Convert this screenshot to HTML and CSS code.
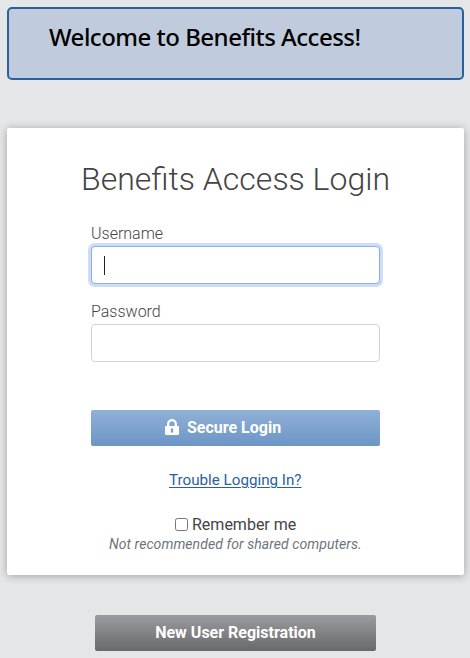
FILE: index.html
```html
<!DOCTYPE html>
<html lang="en">
<head>
<meta charset="utf-8">
<title>Benefits Access Login</title>
<link rel="stylesheet" href="styles.css">
</head>
<body>
<header class="banner"><h1 class="banner-title">Welcome to Benefits Access!</h1></header>
<main class="card">
  <h2 class="card-title"><span class="card-title-text">Benefits Access Login</span></h2>
  <form class="form">
    <div class="label"><span class="label-user">Username</span></div>
    <div class="field field-focus" role="textbox" tabindex="0"><span class="caret"></span></div>
    <div class="label label-second"><span class="label-pass">Password</span></div>
    <div class="field" role="textbox" tabindex="0"></div>
    <button class="button button-login" type="button">
      <svg class="lock" viewBox="0 0 14 16" width="14" height="16"><path fill="#fff" fill-rule="evenodd" d="M1 7h1V5a5 5 0 0 1 10 0v2h1q1 0 1 1v7q0 1-1 1H1q-1 0-1-1V8q0-1 1-1zM4.3 7h5.4V5a2.7 2.7 0 0 0-5.4 0zM7 9.2a1.2 1.2 0 0 0-1.2 1.2v2.2a1.2 1.2 0 0 0 2.4 0v-2.2A1.2 1.2 0 0 0 7 9.2z"/></svg>
      <span class="login-text">Secure Login</span>
    </button>
  </form>
  <div class="trouble"><a class="link" href="#">Trouble Logging In?</a></div>
  <label class="remember"><input class="check" type="checkbox"><span class="remember-text">Remember me</span></label>
  <div class="note"><span class="note-text">Not recommended for shared computers.</span></div>
</main>
<button class="button button-register" type="button"><span class="register-text">New User Registration</span></button>
</body>
</html>
```
FILE: styles.css
```css
* { box-sizing: border-box; }
body {
  margin: 0;
  height: 658px;
  padding: 7px 6px 0 7px;
  overflow: hidden;
  background: #e5e6e8;
  color: #444;
  font: 16px/24px Roboto, sans-serif;
}
.banner {
  height: 73px;
  padding: 12px 0 0 40px;
  border: 2px solid #2b5f9e;
  border-radius: 5px;
  background: #c0cbdd;
}
.banner-title {
  margin: 0;
  color: #000;
  font: 500 24px/32px "Noto Sans", "Open Sans", sans-serif;
  letter-spacing: -0.5px;
  white-space: nowrap;
}
.card {
  height: 447px;
  margin-top: 48px;
  padding-top: 30px;
  border-radius: 2px;
  background: #fff;
  box-shadow: 0 1px 8px rgba(0, 0, 0, 0.3);
}
.card-title {
  margin: 0;
  padding-left: 74px;
  font-size: 32px;
  font-weight: 300;
  line-height: 42px;
  white-space: nowrap;
}
.form { width: 289px; margin: 22px 0 0 84px; }
.label { height: 24px; font-weight: 300; }
.label-second { margin-top: 16px; }
.field {
  display: flex;
  align-items: center;
  height: 38px;
  padding-left: 12px;
  border: 1px solid #d2d3d5;
  border-radius: 4px;
  background: #fff;
}
.field-focus { border-color: #88aee9; box-shadow: 0 0 0 3px #cedcf8; }
.caret { width: 1px; height: 19px; background: #222; }
.button {
  display: flex;
  align-items: center;
  justify-content: center;
  height: 36px;
  padding: 0;
  border: 0;
  border-radius: 2px;
  color: #fff;
  font: 700 16px/24px Roboto, sans-serif;
  white-space: nowrap;
}
.button-login {
  width: 289px;
  margin-top: 48px;
  padding-left: 74px;
  justify-content: flex-start;
  gap: 8px;
  background: linear-gradient(#90b1d8, #6c95c6);
}
.lock { position: relative; top: -1px; }
.trouble { margin-top: 22px; padding-left: 162px; }
.link { color: #2b5f9e; font-size: 15.2px; text-underline-offset: 2px; }
.remember { display: flex; align-items: center; margin: 21px 0 0 168px; }
.check { position: relative; top: -1px; width: 13px; height: 13px; margin: 0 4px 0 0; }
.note {
  padding-left: 102px;
  color: #6c757d;
  font-size: 14px;
  font-style: italic;
  letter-spacing: 0.07px;
  line-height: 15px;
}
.button-register {
  width: 281px;
  margin: 40px 0 0 88px;
  background: linear-gradient(#9b9ca0, #69696a);
}
```
